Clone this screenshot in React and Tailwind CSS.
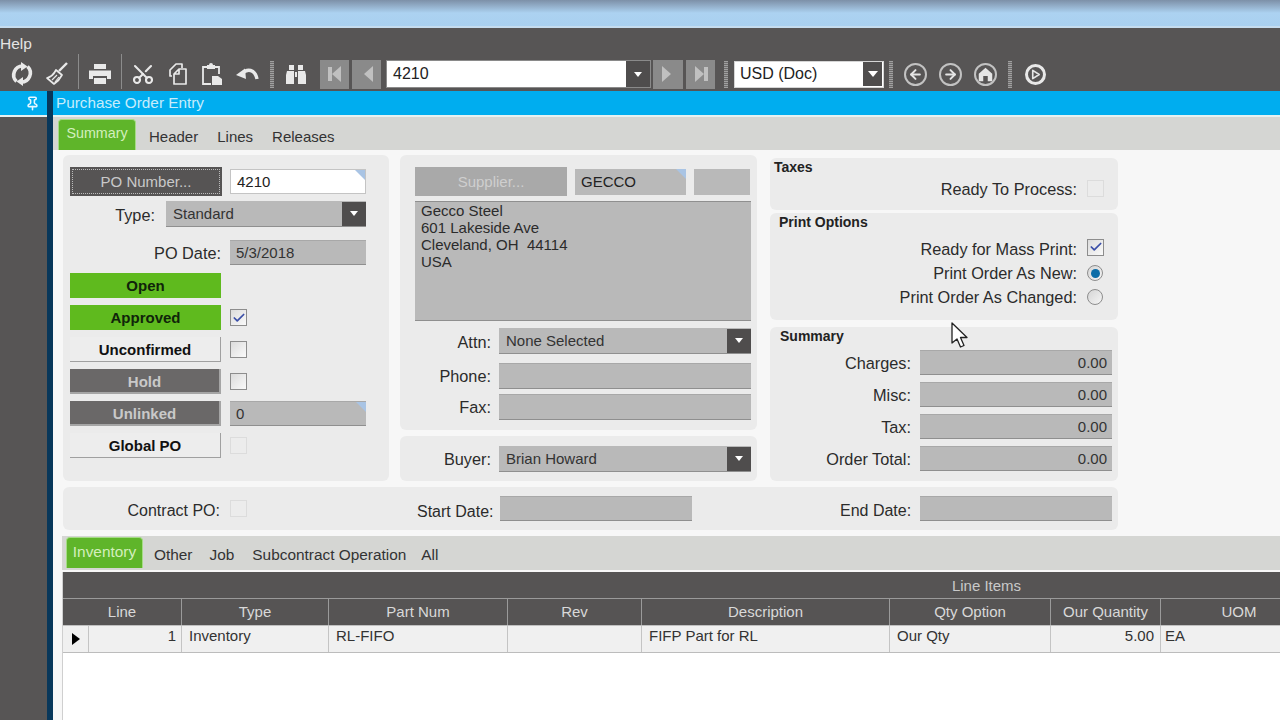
import React from 'react';
import { Scissors, Pin, ArrowLeft, ArrowRight, Check } from 'lucide-react';

const Sep = ({ className }) => <div className={`w-[4px] h-[27px] bg-[repeating-linear-gradient(to_bottom,#a0a0a0_0,#a0a0a0_1px,#6e6c6c_1px,#6e6c6c_2px)] ${className}`} />;
const Line = ({ className }) => <div className={`w-px h-[35px] self-end bg-[#8c8c8c] ${className}`} />;

function ToolIcon({ children, className }) {
  return <div className={`flex items-center justify-center w-[26px] h-[28px] text-[#e9e9e9] ${className}`}>{children}</div>;
}

function Glyph({ children }) {
  return <svg width="26" height="26" viewBox="0 0 26 26" fill="none" stroke="currentColor">{children}</svg>;
}

function NavBtn({ className, flip, bar }) {
  return (
    <div className={`flex items-center justify-center h-[29px] bg-[#8a8a8a] ${className}`}>
      <svg width="20" height="20" viewBox="0 0 20 20" className={flip ? 'rotate-180' : ''} fill="#c0c0c0">
        {bar && <rect x="3" y="3" width="4" height="14" />}
        <path d="M16 2 L7 10 L16 18 Z" />
      </svg>
    </div>
  );
}

function Circle({ children, className }) {
  return <div className={`flex items-center justify-center w-[23px] h-[23px] rounded-full border-2 border-[#c2c2c2] text-[#e5e5e5] ${className}`}>{children}</div>;
}

function Arrow({ big }) {
  return <div className={big ? 'border-x-[5px] border-t-[6px] border-x-transparent border-t-white' : 'border-x-[4px] border-t-[5px] border-x-transparent border-t-white'} />;
}

function Corner() {
  return <div className="absolute top-0 right-0 w-0 h-0 border-l-[10px] border-t-[10px] border-l-transparent border-t-[#a9c4e4]" />;
}

function Field({ className, children, right, corner }) {
  return (
    <div className={`relative flex items-center h-[25px] pt-[1px] pl-[6px] pr-[5px] bg-[#b9b9b9] border-b border-[#8f8f8f] border-t border-t-[#a8a8a8] text-[15px] text-[#333] ${right ? 'justify-end' : ''} ${className}`}>
      {children}
      {corner && <Corner />}
    </div>
  );
}

function Select({ className, children }) {
  return (
    <div className={`flex items-center h-[26px] pl-[7px] bg-[#b9b9b9] border-b border-[#8f8f8f] text-[15px] text-[#333] ${className}`}>
      <span className="flex-1 pt-[1px]">{children}</span>
      <div className="flex items-center justify-center w-[24px] h-[24px] bg-[#4f4d4d]"><Arrow /></div>
    </div>
  );
}

function Label({ className, children }) {
  return <div className={`pt-[2px] text-right text-[16.3px] leading-none whitespace-nowrap text-[#2b2b2b] ${className}`}>{children}</div>;
}

function Check3({ checked, disabled, className }) {
  return (
    <div className={`flex items-center justify-center w-[17px] h-[17px] border ${disabled ? 'border-[#dcdcdc] bg-[#ececec]' : 'border-[#8d8d8d] bg-gradient-to-br from-[#dcdcdc] to-[#fafafa]'} ${className}`}>
      {checked && <Check size={14} strokeWidth={3} className="text-[#3b4fa8]" />}
    </div>
  );
}

function Radio({ checked }) {
  return (
    <div className="flex items-center justify-center w-[16px] h-[16px] rounded-full border border-[#8d8d8d] bg-gradient-to-br from-[#d5d5d5] to-[#f5f5f5]">
      {checked && <div className="w-[9px] h-[9px] rounded-full bg-[#0c6da8]" />}
    </div>
  );
}

function StatusBtn({ kind, children }) {
  const styles = {
    green: 'pt-[1px] bg-[#5fba1e] text-[#10240a]',
    plain: 'pt-[3px] bg-[#ededed] text-[#111] border-r border-b border-[#a0a0a0]',
    dark: 'pt-[4px] bg-[#6a6868] text-[#c9c9c9] border-r-2 border-b-2 border-[#a5a5a5]',
  };
  return <div className={`flex items-center justify-center w-[151px] h-[25px] font-bold text-[15px] ${styles[kind]}`}>{children}</div>;
}

function Tab({ active, className, children }) {
  if (active) {
    return (
      <div className={`flex items-center justify-center h-[31px] pb-[2px] bg-[#5fb52a] border border-[#a5dc85] border-b-0 rounded-t-[4px] text-[#d3efbd] ${className}`}>
        {children}
      </div>
    );
  }
  return <div className={`text-[#333] ${className}`}>{children}</div>;
}

const columns = [
  { name: 'Line', w: 'w-[119px]' },
  { name: 'Type', w: 'w-[147px]' },
  { name: 'Part Num', w: 'w-[179px]' },
  { name: 'Rev', w: 'w-[134px]' },
  { name: 'Description', w: 'w-[248px]' },
  { name: 'Qty Option', w: 'w-[161px]' },
  { name: 'Our Quantity', w: 'w-[110px]' },
  { name: 'UOM', w: 'w-[157px]' },
];

export default function App() {
  return (
    <div className="relative w-[1280px] h-[720px] overflow-hidden flex flex-col font-['Liberation_Sans',Arial,sans-serif] bg-[#575555]">
      <div className="h-[28px] border-b-2 border-[#c5dcef] bg-gradient-to-b from-[#7d90a8] via-[#acd2f1] to-[#a9d0f0]" />

      <div className="h-[31px] pt-[6px] text-[15.5px] leading-[20px] text-[#e4e4e4]">Help</div>

      <div className="flex items-center h-[32px] pb-[2px] shrink-0">
        <ToolIcon className="ml-[9px]">
          <Glyph>
            <g strokeWidth="3.6">
              <path d="M14 5 A9 9 0 0 0 7.5 20.5" />
              <path d="M12 21 A9 9 0 0 0 18.5 5.5" />
            </g>
            <path d="M12 1 L18.5 5.5 L12 10 Z M14 16 L7.5 20.5 L14 25 Z" fill="currentColor" stroke="none" />
          </Glyph>
        </ToolIcon>
        <ToolIcon className="ml-[9px]">
          <Glyph>
            <path d="M23 2 L15 10" strokeWidth="2.4" />
            <path d="M12 9 L18 14 C16 18 13 21 10 23 L3 17 C7 16 10 13 12 9 Z" strokeWidth="1.7" strokeLinejoin="round" />
            <path d="M8 19 L13 14 M11 21 L15 16" strokeWidth="1.2" />
          </Glyph>
        </ToolIcon>
        <Line className="ml-[8px]" />
        <ToolIcon className="ml-[8px]">
          <Glyph>
            <path d="M7 3 H19 V8 H7 Z M2 9.5 H24 V18 H20 V15 H6 V18 H2 Z M7 17 H19 V23 H7 Z" fill="currentColor" stroke="none" />
          </Glyph>
        </ToolIcon>
        <Line className="ml-[8px]" />
        <ToolIcon className="ml-[8px]"><Scissors size={24} strokeWidth={2.1} className="-rotate-90" /></ToolIcon>
        <ToolIcon className="ml-[9px]">
          <Glyph>
            <path d="M7 15 H5 V9 L11 3 H17 V7" strokeWidth="1.7" strokeLinejoin="round" />
            <path d="M9 13 L14 8 H21 V23 H9 Z M14 8 V13 H9" strokeWidth="1.7" strokeLinejoin="round" />
          </Glyph>
        </ToolIcon>
        <ToolIcon className="ml-[8px]">
          <Glyph>
            <path d="M8 6 H4 V23 H12 M15 6 H20 V13" strokeWidth="1.8" />
            <path d="M8 8 V4 H10 A2 2 0 0 1 14 4 H16 V8 Z" fill="currentColor" stroke="none" />
            <path d="M13 15 H19 L23 18 V24 H13 Z" fill="currentColor" stroke="none" />
          </Glyph>
        </ToolIcon>
        <ToolIcon className="ml-[9px]">
          <Glyph>
            <path d="M8 13 C13 7 21 8 23 18" strokeWidth="3.4" />
            <path d="M2 14 L11 7.5 L12 18 Z" fill="currentColor" stroke="none" />
          </Glyph>
        </ToolIcon>
        <Sep className="ml-[10px]" />
        <ToolIcon className="ml-[9px]">
          <Glyph>
            <path d="M6 4 H11 V9 H6 Z M15 4 H20 V9 H15 Z M4 10 H11 V23 H3 V14 Z M15 10 H22 L23 14 V23 H15 Z M12 11 H14 V16 H12 Z" fill="currentColor" stroke="none" />
          </Glyph>
        </ToolIcon>
        <NavBtn className="ml-[11px] w-[29px]" bar />
        <NavBtn className="ml-[3px] w-[29px]" />
        <div className="flex items-center ml-[5px] w-[265px] h-[28px] bg-white border border-[#8a8a8a]">
          <span className="flex-1 pl-[6px] text-[16px] text-[#222]">4210</span>
          <div className="flex items-center justify-center w-[24px] h-[26px] bg-[#4f4d4d]"><Arrow /></div>
        </div>
        <NavBtn className="ml-[2px] w-[30px]" flip />
        <NavBtn className="ml-[3px] w-[29px]" flip bar />
        <Sep className="ml-[9px]" />
        <div className="flex items-center ml-[6px] w-[150px] h-[27px] bg-white border border-[#d5d5d5]">
          <span className="flex-1 pl-[5px] text-[16px] text-[#222]">USD (Doc)</span>
          <div className="flex items-center justify-center w-[19px] h-[24px] mr-px bg-[#4f4d4d]"><Arrow big /></div>
        </div>
        <Sep className="ml-[5px]" />
        <Circle className="ml-[11px]"><ArrowLeft size={15} strokeWidth={3.2} /></Circle>
        <Circle className="ml-[12px]"><ArrowRight size={15} strokeWidth={3.2} /></Circle>
        <Circle className="ml-[12px]">
          <svg width="15" height="15" viewBox="0 0 20 20" fill="currentColor">
            <path d="M10 1 L1 9 V19 H7 V12 H13 V19 H19 V9 Z" />
          </svg>
        </Circle>
        <Sep className="ml-[11px]" />
        <Circle className="ml-[13px] !w-[21px] !h-[21px] !border-[3px] !border-[#e8e8e8]">
          <svg width="11" height="11" viewBox="0 0 12 12" fill="none" stroke="currentColor" strokeWidth="1.8">
            <path d="M3 1.5 L10 6 L3 10.5 Z" strokeLinejoin="round" />
          </svg>
        </Circle>
      </div>

      <div className="flex flex-1 min-h-0">
        <div className="w-[47px] shrink-0">
          <div className="flex items-center justify-end h-[24px] pr-[7px] bg-[#00adef] text-[#e8f7ff]"><Pin size={15} strokeWidth={2.5} /></div>
          <div className="h-[2px] bg-[#e6f1f1]" />
        </div>
        <div className="w-[6px] shrink-0 bg-[#08375a]" />

        <div className="flex-1 min-w-0 flex flex-col bg-[#f7f7f7]">
          <div className="flex items-center h-[24px] pl-[3px] bg-[#00adef] text-[15.3px] text-[#c6ecfb]">Purchase Order Entry</div>
          <div className="h-[2px] bg-[#e6f1f1]" />
          <div className="flex items-start h-[33px] pt-[2px] pl-[5px] bg-[#d5d6d3] text-[15px] shrink-0">
            <Tab active className="w-[78px] text-[14.3px]">Summary</Tab>
            <Tab className="ml-[13px] pt-[7px]">Header</Tab>
            <Tab className="ml-[19px] pt-[7px]">Lines</Tab>
            <Tab className="ml-[19px] pt-[7px]">Releases</Tab>
          </div>

          <div className="flex items-start mt-[5px] ml-[10px]">
            <div className="w-[326px] h-[326px] pt-[12px] pl-[7px] rounded-[6px] bg-[#ebebeb] shrink-0">
              <div className="flex items-center h-[29px]">
                <div className="flex items-center justify-center w-[152px] h-[29px] pt-[2px] bg-[#565454] outline-1 outline-dotted -outline-offset-3 outline-[#bbb] text-[15px] text-[#c9c9c9]">PO Number...</div>
                <div className="relative flex items-center ml-[8px] w-[136px] h-[25px] pt-[1px] pl-[6px] bg-white border border-[#c4c4c4] text-[15px] text-[#222]">4210<Corner /></div>
              </div>
              <div className="flex items-center mt-[5px]">
                <Label className="w-[85px]">Type:</Label>
                <Select className="ml-[11px] w-[200px]">Standard</Select>
              </div>
              <div className="flex items-center mt-[13px]">
                <Label className="w-[151px]">PO Date:</Label>
                <Field className="ml-[9px] w-[136px]">5/3/2018</Field>
              </div>
              <div className="mt-[8px]"><StatusBtn kind="green">Open</StatusBtn></div>
              <div className="flex items-center mt-[7px]"><StatusBtn kind="green">Approved</StatusBtn><Check3 checked className="ml-[9px]" /></div>
              <div className="flex items-center mt-[7px]"><StatusBtn kind="plain">Unconfirmed</StatusBtn><Check3 className="ml-[9px]" /></div>
              <div className="flex items-center mt-[7px]"><StatusBtn kind="dark">Hold</StatusBtn><Check3 className="ml-[9px]" /></div>
              <div className="flex items-center mt-[7px]"><StatusBtn kind="dark">Unlinked</StatusBtn><Field corner className="ml-[9px] w-[136px]">0</Field></div>
              <div className="flex items-center mt-[7px]"><StatusBtn kind="plain">Global PO</StatusBtn><Check3 disabled className="ml-[9px]" /></div>
            </div>

            <div className="w-[357px] ml-[11px] shrink-0">
              <div className="h-[275px] pt-[12px] pl-[15px] rounded-[6px] bg-[#ebebeb]">
                <div className="flex items-center h-[29px]">
                  <div className="flex items-center justify-center w-[152px] h-[29px] pt-[2px] bg-[#a9a9a9] text-[15px] text-[#cfcfcf]">Supplier...</div>
                  <div className="relative flex items-center ml-[8px] w-[111px] h-[26px] pt-[1px] pl-[6px] bg-[#b9b9b9] text-[15px] text-[#222]">GECCO<Corner /></div>
                  <div className="ml-[8px] w-[56px] h-[26px] bg-[#b9b9b9]" />
                </div>
                <div className="mt-[5px] w-[336px] h-[120px] pl-[6px] bg-[#b9b9b9] border-t border-b border-[#8f8f8f] text-[15px] leading-[17px] text-[#2b2b2b]">
                  <div>Gecco Steel</div>
                  <div>601 Lakeside Ave</div>
                  <div>Cleveland, OH&nbsp;&nbsp;44114</div>
                  <div>USA</div>
                </div>
                <div className="flex items-center mt-[7px]">
                  <Label className="w-[76px]">Attn:</Label>
                  <Select className="ml-[8px] w-[252px]">None Selected</Select>
                </div>
                <div className="flex items-center mt-[9px]">
                  <Label className="w-[76px] !pt-0">Phone:</Label>
                  <Field className="ml-[8px] w-[252px] h-[26px]" />
                </div>
                <div className="flex items-center mt-[5px]">
                  <Label className="w-[76px] !pt-0">Fax:</Label>
                  <Field className="ml-[8px] w-[252px] h-[26px]" />
                </div>
              </div>
              <div className="flex items-center h-[45px] mt-[6px] pt-[1px] pl-[15px] rounded-[6px] bg-[#ebebeb]">
                <Label className="w-[76px] !pt-0">Buyer:</Label>
                <Select className="ml-[8px] w-[252px]">Brian Howard</Select>
              </div>
            </div>

            <div className="w-[348px] ml-[13px] shrink-0">
              <div className="h-[52px] mt-[3px] pt-[1px] pl-[4px] rounded-[6px] bg-[#ebebeb]">
                <div className="text-[14px] leading-[16px] font-bold text-[#222]">Taxes</div>
                <div className="flex items-center mt-[5px]">
                  <Label className="w-[303px] !pt-[1px]">Ready To Process:</Label>
                  <Check3 disabled className="ml-[10px]" />
                </div>
              </div>
              <div className="h-[107px] mt-[3px] pt-[1px] pl-[9px] rounded-[6px] bg-[#ebebeb]">
                <div className="text-[14px] leading-[16px] font-bold text-[#222]">Print Options</div>
                <div className="flex items-center mt-[8px] h-[20px]">
                  <Label className="w-[298px]">Ready for Mass Print:</Label>
                  <Check3 checked className="ml-[10px] mb-[2px]" />
                </div>
                <div className="flex items-center mt-[4px] h-[20px]">
                  <Label className="w-[298px]">Print Order As New:</Label>
                  <div className="ml-[10px] mt-[2px]"><Radio checked /></div>
                </div>
                <div className="flex items-center mt-[4px] h-[20px]">
                  <Label className="w-[298px]">Print Order As Changed:</Label>
                  <div className="ml-[10px] mt-[2px]"><Radio /></div>
                </div>
              </div>
              <div className="h-[154px] mt-[7px] pt-[1px] pl-[10px] rounded-[6px] bg-[#ebebeb]">
                <div className="text-[14px] leading-[16px] font-bold text-[#222]">Summary</div>
                {['Charges:', 'Misc:', 'Tax:', 'Order Total:'].map((label, i) => (
                  <div key={label} className={`flex items-center ${i === 0 ? 'mt-[6px]' : 'mt-[7px]'}`}>
                    <Label className="w-[131px]">{label}</Label>
                    <Field right className="ml-[9px] w-[192px]">0.00</Field>
                  </div>
                ))}
              </div>
            </div>
          </div>

          <div className="flex items-center mt-[6px] ml-[10px] w-[1055px] h-[43px] rounded-[6px] bg-[#ebebeb] shrink-0">
            <Label className="w-[157px] !pt-[4px] !text-[16px]">Contract PO:</Label>
            <Check3 disabled className="ml-[10px]" />
            <Label className="w-[75px] ml-[170px] !pt-[6px] !text-[16px]">Start Date:</Label>
            <Field className="ml-[8px] w-[192px]" />
            <Label className="w-[71px] ml-[148px] !pt-[4px] !text-[16px]">End Date:</Label>
            <Field className="ml-[9px] w-[192px]" />
          </div>

          <div className="flex items-start h-[34px] mt-[6px] ml-[9px] pt-[1px] pl-[4px] bg-[#d5d6d3] text-[15.4px] shrink-0">
            <Tab active className="w-[77px]">Inventory</Tab>
            <Tab className="ml-[11px] pt-[6px]">Other</Tab>
            <Tab className="ml-[17px] pt-[6px]">Job</Tab>
            <Tab className="ml-[18px] pt-[6px]">Subcontract Operation</Tab>
            <Tab className="ml-[15px] pt-[6px]">All</Tab>
          </div>

          <div className="flex-1 mt-[2px] ml-[9px] w-[1848px] bg-white border-l border-[#cfcfcf]">
            <div className="flex items-center justify-center h-[26px] pt-[2px] bg-[#565454] text-[15px] text-[#c9c9c9]">Line Items</div>
            <div className="flex h-[27px] border-t border-[#9a9a9a] bg-[#565454]">
              {columns.map((c) => (
                <div key={c.name} className={`flex items-center justify-center ${c.w} border-r border-[#9a9a9a] text-[15px] text-[#d9d9d9]`}>{c.name}</div>
              ))}
            </div>
            <div className="flex h-[28px] border-y border-t-[#c0c0c0] border-b-[#bcbcbc] bg-[#f0f0f0] text-[15px] leading-[20px] text-[#333]">
              <div className="flex items-center justify-center w-[26px] border-r border-[#c4c4c4]">
                <div className="border-y-[6px] border-l-[8px] border-y-transparent border-l-black" />
              </div>
              <div className="w-[93px] pr-[5px] text-right border-r border-[#c4c4c4]">1</div>
              <div className="w-[147px] pl-[7px] border-r border-[#c4c4c4]">Inventory</div>
              <div className="w-[179px] pl-[7px] border-r border-[#c4c4c4]">RL-FIFO</div>
              <div className="w-[134px] border-r border-[#c4c4c4]" />
              <div className="w-[248px] pl-[7px] border-r border-[#c4c4c4]">FIFP Part for RL</div>
              <div className="w-[161px] pl-[7px] border-r border-[#c4c4c4]">Our Qty</div>
              <div className="w-[110px] pr-[6px] text-right border-r border-[#c4c4c4]">5.00</div>
              <div className="w-[157px] pl-[4px]">EA</div>
            </div>
          </div>
        </div>
      </div>

      <svg className="absolute left-[950px] top-[322px]" width="18" height="27" viewBox="0 0 18 27">
        <path d="M2 1 L2 21 L7 17 L10.5 25 L14 23.5 L10.5 15.5 L17 15.5 Z" fill="#fff" stroke="#222" strokeWidth="1.3" strokeLinejoin="round" />
      </svg>
    </div>
  );
}
